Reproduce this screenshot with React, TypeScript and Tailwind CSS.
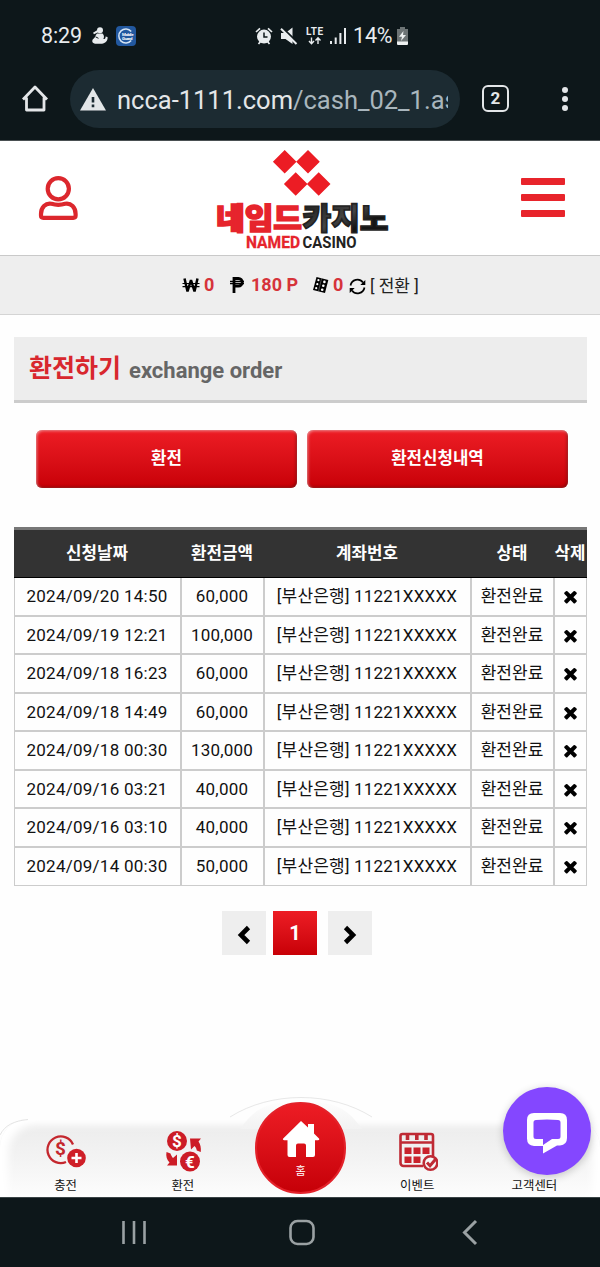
import React, { useState } from 'react';

const orders = [
  { date: '2024/09/20 14:50', amount: '60,000' },
  { date: '2024/09/19 12:21', amount: '100,000' },
  { date: '2024/09/18 16:23', amount: '60,000' },
  { date: '2024/09/18 14:49', amount: '60,000' },
  { date: '2024/09/18 00:30', amount: '130,000' },
  { date: '2024/09/16 03:21', amount: '40,000' },
  { date: '2024/09/16 03:10', amount: '40,000' },
  { date: '2024/09/14 00:30', amount: '50,000' },
];

function StatusBar() {
  return (
    <div className="flex h-[70px] items-center pt-px text-[#e8ecee]">
      <span className="ml-[41px] w-[50px] text-[21.5px] leading-none tracking-[-0.1px]">8:29</span>
      <svg className="h-5 w-[17px]" viewBox="0 0 17 20" fill="currentColor">
        <circle cx="9" cy="4.2" r="3" />
        <path d="M2 6.800 6.500 4l1.200 2L3 8.200z" />
        <path d="M6 7.500h5.500c1.500 1.500 2 3.500.8 5.500 1.700.2 2.500-.8 2.200-2.500l2 .5c.6 3.500-1.800 6.200-5.500 6.800H4C.8 17.500.3 14 3 12.200 4 11.500 4.500 9 6 7.500z" />
        <path d="m4.500 10.800 3 1.500" stroke="#0d171a" strokeWidth="1" />
      </svg>
      <div className="ml-[8px] h-5 w-5 overflow-hidden rounded-[4px] bg-[#22589f]">
        <svg viewBox="0 0 20 20">
          <path d="M15.200 5.500A7 7 0 1 0 15.200 14.500" fill="none" stroke="#d5e4f4" strokeWidth="1.500" />
          <text x="6" y="9.600" fontSize="4.400" fontWeight="700" fill="#fff" textLength="11.500">Mobile</text>
          <text x="6" y="13.500" fontSize="4.400" fontWeight="700" fill="#fff" textLength="10.500">Guard</text>
        </svg>
      </div>
      <svg className="ml-[119px] h-[18px] w-[18px]" viewBox="0 0 18 18" fill="currentColor">
        <circle cx="9" cy="9.600" r="7" />
        <path d="M1 5 5 1.300M17 5l-4-3.700M3.500 17l2-2.500M14.500 17l-2-2.500" stroke="currentColor" strokeWidth="1.700" />
        <path d="M9 5.500v4.600h3.500" stroke="#0d171a" strokeWidth="1.500" fill="none" />
      </svg>
      <svg className="ml-[7px] h-[18px] w-[18px]" viewBox="0 0 18 18" fill="currentColor">
        <path d="M1 6h4.500L12.500.5v16.500L5.500 12H1z" />
        <path d="M2.500 1 18 16" stroke="#0d171a" strokeWidth="2" />
        <path d="M1 1.800 16.500 17" stroke="currentColor" strokeWidth="2" />
      </svg>
      <svg className="ml-[7px] h-5 w-[20px]" viewBox="0 0 20 20" fill="currentColor">
        <text x="1" y="9.400" fontSize="10" fontWeight="700" textLength="17">LTE</text>
        <path d="M6.500 11.500v6M4 15l2.500 2.800L9 15M13 18v-6M10.500 14.500 13 11.800l2.500 2.700" stroke="currentColor" strokeWidth="1.400" fill="none" />
      </svg>
      <svg className="ml-[5px] h-[18px] w-[17px]" viewBox="0 0 17 18" fill="currentColor">
        <path d="M0 14h2v3H0zM4.700 10.500h2V17h-2zM9.400 6h2v11h-2zM14 1h2v16h-2z" />
      </svg>
      <span className="ml-[6px] w-[43px] text-[21.5px] leading-none tracking-[-0.2px]">14%</span>
      <svg className="h-[18px] w-[13px]" viewBox="0 0 13 18">
        <path d="M4 0h5v2h3v14H1V2h3z" fill="#6d7475" />
        <path d="M1 14.500h11V17a1 1 0 0 1-1 1H2a1 1 0 0 1-1-1z" fill="#eef1f1" />
        <path d="M7.500 4 3 9.700h3L5 14l5-6H7z" fill="#eef1f1" />
      </svg>
    </div>
  );
}

function BrowserBar() {
  return (
    <div className="flex h-[71px] items-start border-b border-[#4a5052] text-[#e3e6e8]">
      <svg className="mt-[14px] ml-[21px] h-[30px] w-[28px]" viewBox="0 0 28 30" fill="none" stroke="currentColor" strokeWidth="2.800" strokeLinejoin="round">
        <path d="M2 15.500 14 3l12 12.500M5.500 13.500V26h17.500V13.500" />
      </svg>
      <div className="ml-[21px] flex h-[58px] w-[390px] items-center rounded-full bg-[#1c2b32]">
        <svg className="ml-[10px] h-[23px] w-[26px]" viewBox="0 0 26 23">
          <path d="M13 0 26 22.500H0z" fill="currentColor" />
          <path d="M13 9v5.500M13 16.500v2.700" stroke="#1c2b32" strokeWidth="2.600" />
        </svg>
        <div className="mt-px ml-[11px] w-[331px] overflow-hidden text-[25.5px] leading-[34px] whitespace-nowrap">
          ncca-1111.com<span className="text-[#a9b6bd]">/cash_02_1.asp</span>
        </div>
      </div>
      <div className="mt-[15px] ml-[22px] flex h-[27px] w-[27px] items-center justify-center rounded-[6px] border-[2.6px] border-current text-[17px] leading-none font-bold">
        2
      </div>
      <div className="mt-[17px] ml-[53px] flex w-[6px] flex-col gap-[3px]">
        <i className="h-[6px] w-[6px] rounded-full bg-current" />
        <i className="h-[6px] w-[6px] rounded-full bg-current" />
        <i className="h-[6px] w-[6px] rounded-full bg-current" />
      </div>
    </div>
  );
}

function Logo() {
  return (
    <svg className="h-[104px] w-[176px] overflow-visible" viewBox="0 0 176 104">
      <defs>
        <linearGradient id="logoDark" x1="0" y1="0" x2="1" y2="1">
          <stop offset="0" stopColor="#111" />
          <stop offset="0.500" stopColor="#444" />
          <stop offset="0.700" stopColor="#151515" />
        </linearGradient>
      </defs>
      <g fill="#ec1c24">
        <path d="M70.700 3 82.500 14.800 70.700 26.600 58.900 14.800zM94 3l11.800 11.800L94 26.600 82.200 14.800zM81.700 25.200l11.800 11.800-11.800 11.800L69.900 37zM104.700 25.200l11.800 11.800-11.800 11.800L92.900 37z" />
      </g>
      <g className="font-['Noto_Sans_CJK_KR',sans-serif]" fontSize="30" fontWeight="900" strokeWidth="1.600">
        <text x="2" y="81.500" textLength="86" lengthAdjust="spacingAndGlyphs" fill="#e6242c" stroke="#e6242c">네임드</text>
        <text x="88.500" y="81.500" textLength="86" lengthAdjust="spacingAndGlyphs" fill="url(#logoDark)" stroke="#222">카지노</text>
      </g>
      <g fontSize="16.500" fontWeight="700">
        <text x="32" y="101.300" textLength="54" lengthAdjust="spacingAndGlyphs" fill="#e6242c" stroke="#e6242c" strokeWidth="0.300">NAMED</text>
        <text x="88.500" y="101.300" textLength="54" lengthAdjust="spacingAndGlyphs" fill="#222">CASINO</text>
      </g>
    </svg>
  );
}

function Header() {
  return (
    <header className="flex h-[115px] items-start border-b border-[#c9c9c9] bg-white">
      <svg className="mt-[34px] ml-[38px] h-[46px] w-[41px]" viewBox="0 0 41 46" fill="none" stroke="#dc272d" strokeWidth="4.200">
        <circle cx="20.300" cy="13.700" r="10.600" />
        <path d="M13.500 28.800C7.500 27.700 3 32.500 3 39v1.500c0 1.500.8 2.300 2.300 2.300h30c1.500 0 2.300-.8 2.300-2.300V39c0-6.500-4.500-11.300-10.500-10.200-4.500 1.400-9.100 1.400-13.600 0z" />
      </svg>
      <div className="mt-[6px] ml-[135px]">
        <Logo />
      </div>
      <button className="mt-[37px] ml-[131px] flex w-[44px] flex-col gap-[9px]">
        <i className="h-[7px] w-full rounded-[1px] bg-[#e8242b]" />
        <i className="h-[7px] w-full rounded-[1px] bg-[#e8242b]" />
        <i className="h-[7px] w-full rounded-[1px] bg-[#e8242b]" />
      </button>
    </header>
  );
}

function PointBar() {
  return (
    <div className="flex h-[59px] items-center border-b border-[#d4d4d4] bg-[#eee] text-[18px] leading-none font-bold text-[#d6333a]">
      <svg className="ml-[182px] h-4 w-[18px]" viewBox="0 0 18 16" fill="none" stroke="#000">
        <path d="m2.500 1.500 3 13L9 3l3.500 11.500 3-13" strokeWidth="2.500" strokeLinejoin="bevel" />
        <path d="M.5 6.500h17M.5 9.700h17" strokeWidth="1.200" />
      </svg>
      <span className="ml-[4px] w-[26px]">0</span>
      <svg className="h-4 w-[14px]" viewBox="0 0 14 16" fill="none" stroke="#000">
        <path d="M4 16V1.500h4.500a3.400 3.400 0 0 1 0 7.500H4" strokeWidth="2.800" />
        <path d="M0 4.500h14M0 6.700h14" strokeWidth="1.300" />
      </svg>
      <span className="ml-[7px] w-[61px]">180 P</span>
      <svg className="h-4 w-[17px]" viewBox="0 0 17 16">
        <path d="M4.500 0 16.300 3l-3.300 13L1 13z" fill="#000" />
        <g fill="#fff">
          <circle cx="6.400" cy="3.200" r="1.100" />
          <circle cx="5.300" cy="7.200" r="1.100" />
          <circle cx="4.200" cy="11.200" r="1.100" />
          <circle cx="12.400" cy="4.900" r="1.300" />
          <circle cx="11.300" cy="8.800" r="1.300" />
          <circle cx="10.200" cy="12.700" r="1.300" />
        </g>
        <path d="M9.600 1.300 6.500 14.500" stroke="#999" strokeWidth="0.500" />
      </svg>
      <span className="ml-[4px] w-[16px]">0</span>
      <svg className="mt-[3px] h-[17px] w-[17px]" viewBox="0 0 17 17" fill="none" stroke="#000" strokeWidth="1.700">
        <path d="M1.500 7.500a7 7 0 0 1 12.500-3M15.500 9.500A7 7 0 0 1 3 12.500" />
        <path d="M16.300 2v5h-5zM.700 15v-5h5z" fill="#000" stroke="none" />
      </svg>
      <span className="mt-[3px] ml-[4px] text-[17px] font-normal text-[#222]">[ 전환 ]</span>
    </div>
  );
}

function RedButton({ label }: { label: string }) {
  return (
    <button className="flex h-[58px] w-[261px] items-center justify-center rounded-[6px] bg-linear-to-b from-[#ed1c24] to-[#c80006] text-[16.8px] font-bold text-white shadow-[inset_1px_1px_3px_rgba(255,255,255,0.5),inset_-1px_-1px_3px_rgba(70,0,0,0.55)]">
      {label}
    </button>
  );
}

function OrderTable() {
  return (
    <div className="mx-auto mt-[39px] w-[573px] text-center text-[17px] text-[#111]">
      <div className="grid h-[51px] grid-cols-[167px_83px_207px_83px_33px] items-center border-t-[3px] border-b border-t-[#777] border-b-black bg-[#333] text-[16.8px] font-bold whitespace-nowrap text-white">
        <span>신청날짜</span>
        <span>환전금액</span>
        <span>계좌번호</span>
        <span>상태</span>
        <span>삭제</span>
      </div>
      {orders.map((order) => (
        <div
          key={order.date}
          className="grid h-[38.5px] grid-cols-[167px_83px_207px_83px_33px] border-b-2 border-l border-[#ccc] leading-[37px] whitespace-nowrap last:border-b"
        >
          <span className="border-r-2 border-[#ccc] tracking-[0.25px]">{order.date}</span>
          <span className="border-r-2 border-[#ccc] tracking-[0.2px]">{order.amount}</span>
          <span className="border-r-2 border-[#ccc] tracking-[0.2px]">[부산은행] 11221XXXXX</span>
          <span className="border-r-2 border-[#ccc]">환전완료</span>
          <span className="mr-px flex items-center justify-center border-r border-[#ccc]">
            <svg className="h-[19px] w-[19px]" viewBox="0 0 1792 1792">
              <path d="M1490 1322q0 40-28 68l-136 136q-28 28-68 28t-68-28l-294-294-294 294q-28 28-68 28t-68-28l-136-136q-28-28-28-68t28-68l294-294-294-294q-28-28-28-68t28-68l136-136q28-28 68-28t68 28l294 294 294-294q28-28 68-28t68 28l136 136q28 28 28 68t-28 68l-294 294 294 294q28 28 28 68z" />
            </svg>
          </span>
        </div>
      ))}
    </div>
  );
}

function Pagination() {
  const [page, setPage] = useState(1);

  return (
    <div className="mt-[25px] ml-[222px] flex">
      <button className="flex h-[44px] w-[44px] items-center justify-center bg-[#eee]" onClick={() => setPage(1)}>
        <svg className="mt-[3px] h-5 w-4" viewBox="0 0 16 20" fill="none" stroke="#000" strokeWidth="4.600">
          <path d="M12.500 2.500 5 10l7.500 7.500" />
        </svg>
      </button>
      <button className="ml-[7px] h-[44px] w-[44px] bg-linear-to-b from-[#ed1c24] to-[#c80006] pb-px text-[20px] font-bold text-white">
        {page}
      </button>
      <button className="ml-[11px] flex h-[44px] w-[44px] items-center justify-center bg-[#eee]">
        <svg className="mt-[3px] h-5 w-4" viewBox="0 0 16 20" fill="none" stroke="#000" strokeWidth="4.600">
          <path d="M3.500 2.500 11 10l-7.500 7.500" />
        </svg>
      </button>
    </div>
  );
}

function ChargeIcon() {
  return (
    <svg className="h-[42px] w-[42px]" viewBox="0 0 42 42" fill="none">
      <path d="M28 14.500A13.300 13.300 0 1 0 21 32" stroke="#c4272e" strokeWidth="2.300" />
      <text x="15.500" y="25" textAnchor="middle" fontSize="19" fontWeight="700" fill="#c4272e">$</text>
      <circle cx="31.500" cy="28" r="9.300" fill="#cf1f28" />
      <path d="M31.500 23v10M26.500 28h10" stroke="#fff" strokeWidth="2.600" />
    </svg>
  );
}

function ExchangeIcon() {
  return (
    <svg className="h-[42px] w-[42px]" viewBox="0 0 42 42" fill="#cc1c26">
      <circle cx="15" cy="11" r="10" />
      <circle cx="28" cy="31.500" r="10" />
      <g fill="#fff" fontWeight="700" textAnchor="middle">
        <text x="15" y="17" fontSize="17">$</text>
        <text x="28" y="37.500" fontSize="17">€</text>
      </g>
      <path d="M28 8.500h11l-2.500 3c2 3 2.700 6 2.300 10.500l-4-1.500c-.3-2-1-3-2.300-4.500l-3.500 3.500zM15 35.500H5l2.500-3c-2.700-3-3.800-6.500-3-10.500l4 1.500c.5 1.800 1.300 3 2.500 4.500l4-3.500z" />
    </svg>
  );
}

function EventIcon() {
  return (
    <svg className="h-[42px] w-[42px]" viewBox="0 0 42 42" fill="none" stroke="#bf2a34" strokeWidth="2.600">
      <path d="M27 36H7.500a3 3 0 0 1-3-3V6a2 2 0 0 1 2-2H35a2 2 0 0 1 2 2v20M4.500 12.500H37" />
      <path d="M11.500 4v6M20.800 4v6M30 4v6" strokeWidth="3.600" />
      <g fill="#c9222c" stroke="none">
        <path d="M8.500 17.500h7v6.500h-7zM17.500 17.500h7v6.500h-7zM26.500 17.500h7v6.500h-7zM8.500 26.500h7V33h-7zM17.500 26.500h7V33h-7z" />
      </g>
      <circle cx="34.500" cy="33" r="6.800" fill="#f7f7f7" />
      <path d="m31 32.500 3 3.200 6-7" strokeWidth="3" />
    </svg>
  );
}

function BottomNav() {
  return (
    <nav className="relative grid h-[78px] grid-cols-5 rounded-t-[28px] bg-linear-to-b from-[#ebebeb] via-[#f3f3f3] to-[#fdfdfd] px-[7px] text-center text-[12.4px] leading-[16px] text-[#111] shadow-[inset_8px_6px_8px_#fff,inset_-8px_0_8px_#fff]">
      <div className="flex flex-col items-center pt-[11px]">
        <ChargeIcon />
        <span className="mt-[6px]">충전</span>
      </div>
      <div className="flex flex-col items-center pt-[11px]">
        <ExchangeIcon />
        <span className="mt-[6px]">환전</span>
      </div>
      <div />
      <div className="flex flex-col items-center pt-[11px]">
        <EventIcon />
        <span className="mt-[6px]">이벤트</span>
      </div>
      <div className="flex flex-col items-center pt-[59px]">
        <span>고객센터</span>
      </div>

      <svg className="absolute top-0 left-0 h-[20px] w-[30px]" viewBox="0 0 30 20" fill="none">
        <path d="M0 16C5 6 14 2 28 .5" stroke="#ddd" strokeWidth="0.800" />
      </svg>
      <svg className="absolute -top-[22px] left-[226px] h-[32px] w-[150px]" viewBox="0 0 150 32">
        <defs>
          <linearGradient id="bump" x1="0" y1="0" x2="0" y2="1">
            <stop offset="0" stopColor="#fdfdfd" />
            <stop offset="1" stopColor="#f2f2f2" />
          </linearGradient>
        </defs>
        <path d="M14 32C32 6 48 5 75 5s43 1 61 27z" fill="url(#bump)" />
        <path d="M4 20C45-6 105-6 146 20" fill="none" stroke="#ddd" strokeWidth="0.700" />
      </svg>
      <button className="absolute -top-[17px] left-[255px] flex h-[92px] w-[91px] flex-col items-center rounded-full border-2 border-[#e3222a] bg-linear-to-b from-[#ed1c24] to-[#c60007] text-[10.5px] text-white">
        <svg className="mt-[16px] h-[38px] w-[38px]" viewBox="0 0 38 38" fill="#fff">
          <path d="M19 1 26 7.500V4h6v9.500l5 5c.6.800.2 1.700-1 1.700h-3V35q0 2-2 2h-7V25.500q0-2-2-2h-6q-2 0-2 2V37H7.500q-2 0-2-2V20.200H2.200c-1.200 0-1.700-1-1-1.700z" />
        </svg>
        <span className="mt-[4px] text-[11px] leading-[20px]">홈</span>
      </button>
      <button className="absolute -top-[32px] left-[503px] flex h-[88px] w-[88px] items-center justify-center rounded-full bg-[#8447ff] shadow-[0_2px_8px_rgba(0,0,0,0.2)]">
        <svg className="mt-[4px] h-[42px] w-[42px]" viewBox="0 0 42 42">
          <path d="M8 1h26q7 0 7 7v18q0 7-7 7.500h-3L17 41.500V34H8q-7-.5-7-7.500V8q0-7 7-7z" fill="#fff" />
          <path d="M10 8q11-1 22 0 2.500 0 2.500 2.500v14q0 2.500-2.500 2.500h-6l-9 6v-6h-7q-2.500 0-2.500-2.500v-14Q7.500 8 10 8z" fill="#8447ff" />
        </svg>
      </button>
    </nav>
  );
}

function SystemNav() {
  return (
    <div className="h-[70px] border-t border-[#3b4547] bg-[#0d171a]">
      <svg className="h-[69px] w-[600px]" viewBox="0 0 600 69" fill="none" stroke="#9aa1a3" strokeWidth="2.600">
        <path d="M123.500 23v23M134 23v23M144.500 23v23" />
        <rect x="290.500" y="23" width="23" height="23" rx="7" />
        <path d="M476 23 464.500 34.500 476 46" strokeWidth="3" />
      </svg>
    </div>
  );
}

export default function App() {
  return (
    <div className="flex h-[1267px] w-[600px] flex-col overflow-hidden bg-[#fefefe] font-['Roboto','Noto_Sans_CJK_KR',sans-serif]">
      <div className="bg-[#0d171a]">
        <StatusBar />
        <BrowserBar />
      </div>
      <Header />
      <PointBar />
      <main className="flex-1">
        <div className="mt-[22px] ml-[14px] flex h-[66px] w-[573px] items-center border-b-[3px] border-[#ccc] bg-[#ededed] pl-[15px] leading-none font-bold">
          <h1 className="w-[100px] text-[25px] whitespace-nowrap text-[#d8272e]">환전하기</h1>
          <h2 className="mt-[4px] text-[22px] text-[#666]">exchange order</h2>
        </div>
        <div className="mt-[27px] ml-[36px] flex gap-[10px]">
          <RedButton label="환전" />
          <RedButton label="환전신청내역" />
        </div>
        <OrderTable />
        <Pagination />
      </main>
      <BottomNav />
      <SystemNav />
    </div>
  );
}
